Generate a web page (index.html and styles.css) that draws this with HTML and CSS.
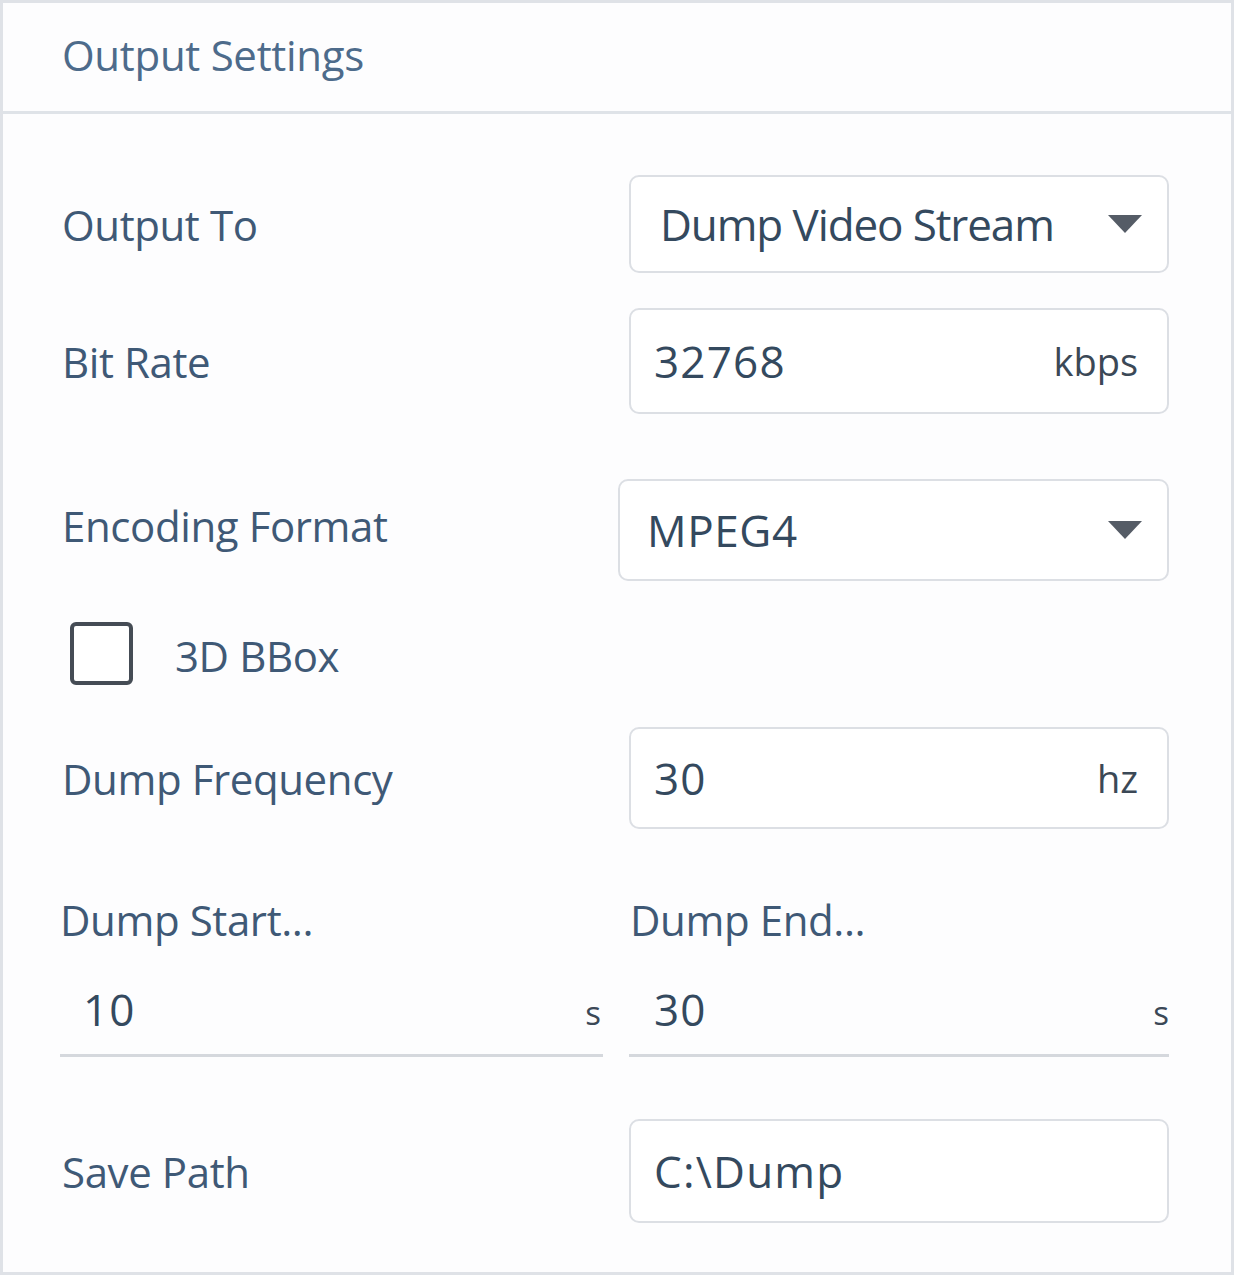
FILE: index.html
```html
<!DOCTYPE html>
<html lang="en">
<head>
    <meta charset="UTF-8">
    <meta name="viewport" content="width=device-width, initial-scale=1.0">
    <title>Output Settings</title>
    <link rel="stylesheet" href="styles.css">
</head>
<body>
<div class="panel">
    <div class="panel-header">Output Settings</div>
    <div class="panel-body">
        <div class="row">
            <span class="label">Output To</span>
            <div class="field select">
                <span class="value">Dump Video Stream</span>
                <svg class="caret" viewBox="0 0 34 18"><path d="M0 0H34L17 18Z"/></svg>
            </div>
        </div>
        <div class="row row-bitrate">
            <span class="label">Bit Rate</span>
            <div class="field number tall">
                <span class="value">32768</span>
                <span class="unit">kbps</span>
            </div>
        </div>
        <div class="row row-format">
            <span class="label label-up">Encoding Format</span>
            <div class="field select wide">
                <span class="value">MPEG4</span>
                <svg class="caret" viewBox="0 0 34 18"><path d="M0 0H34L17 18Z"/></svg>
            </div>
        </div>
        <label class="check-row">
            <span class="checkbox"></span>
            <span class="label">3D BBox</span>
        </label>
        <div class="row row-freq">
            <span class="label">Dump Frequency</span>
            <div class="field number">
                <span class="value">30</span>
                <span class="unit">hz</span>
            </div>
        </div>
        <div class="split">
            <div class="split-col left">
                <div class="label">Dump Start...</div>
                <div class="line-input">
                    <span class="value">10</span>
                    <span class="unit small">s</span>
                </div>
            </div>
            <div class="split-col right">
                <div class="label">Dump End...</div>
                <div class="line-input">
                    <span class="value">30</span>
                    <span class="unit small">s</span>
                </div>
            </div>
        </div>
        <div class="row row-path">
            <span class="label">Save Path</span>
            <div class="field number path">
                <span class="value">C:\Dump</span>
            </div>
        </div>
    </div>
</div>
</body>
</html>
```

FILE: styles.css
```css
body {
    margin: 0;
    background: #fff;
    font-family: "Open Sans", "Noto Sans", sans-serif;
}
.panel {
    width: 1234px;
    height: 1275px;
    box-sizing: border-box;
    border: 3px solid #dfe2e7;
    background: #fdfdfe;
}
.panel-header {
    height: 111px;
    box-sizing: border-box;
    padding: 0 0 6px 59px;
    border-bottom: 3px solid #dfe3e8;
    display: flex;
    align-items: center;
    font-size: 42px;
    letter-spacing: -0.3px;
    color: #4d6b8b;
}
.panel-body {
    padding: 61px 62px 0 59px;
}
.row {
    display: flex;
    align-items: center;
    justify-content: space-between;
}
.label {
    font-size: 42px;
    letter-spacing: -0.4px;
    color: #3f5976;
}
.label-up {
    margin-bottom: 10px;
}
.field {
    width: 540px;
    height: 98px;
    box-sizing: border-box;
    border: 2px solid #dcdfe4;
    border-radius: 10px;
    background: #fff;
    display: flex;
    align-items: center;
    justify-content: space-between;
}
.value {
    font-size: 44px;
    letter-spacing: 1.2px;
    color: #34495e;
}
.select .value {
    letter-spacing: -1.1px;
}
.wide .value {
    letter-spacing: 0.6px;
}
.unit {
    font-size: 38px;
    color: #3b4856;
}
.unit.small {
    font-size: 33px;
    margin-top: 6px;
}
.select {
    padding: 0 25px 0 29px;
}
.caret {
    width: 34px;
    height: 18px;
    fill: #555c66;
}
.number {
    padding: 0 29px 0 23px;
}
.tall {
    height: 106px;
}
.row-bitrate {
    margin-top: 35px;
}
.row-format {
    margin-top: 65px;
}
.wide {
    width: 551px;
    height: 102px;
    padding-left: 27px;
}
.check-row {
    display: flex;
    align-items: center;
    gap: 42px;
    margin: 41px 0 0 8px;
}
.check-row .label {
    margin-top: 3px;
}
.checkbox {
    width: 63px;
    height: 63px;
    box-sizing: border-box;
    border: 4px solid #454c55;
    border-radius: 6px;
    background: #fff;
}
.row-freq {
    margin-top: 42px;
}
.row-freq .field {
    height: 102px;
}
.split {
    display: flex;
    justify-content: space-between;
    margin-top: 61px;
    margin-left: -2px;
}
.split-col.left {
    width: 543px;
}
.split-col.right {
    width: 540px;
}
.split-col .label {
    height: 60px;
    line-height: 60px;
}
.split-col.right .label {
    padding-left: 1px;
}
.line-input {
    height: 107px;
    box-sizing: border-box;
    padding-top: 14px;
    border-bottom: 3px solid #d5d8dd;
    display: flex;
    align-items: center;
    justify-content: space-between;
}
.left .line-input {
    padding-left: 23px;
    padding-right: 2px;
}
.right .line-input {
    padding-left: 25px;
}
.row-path {
    margin-top: 62px;
}
.path {
    height: 104px;
}
```
